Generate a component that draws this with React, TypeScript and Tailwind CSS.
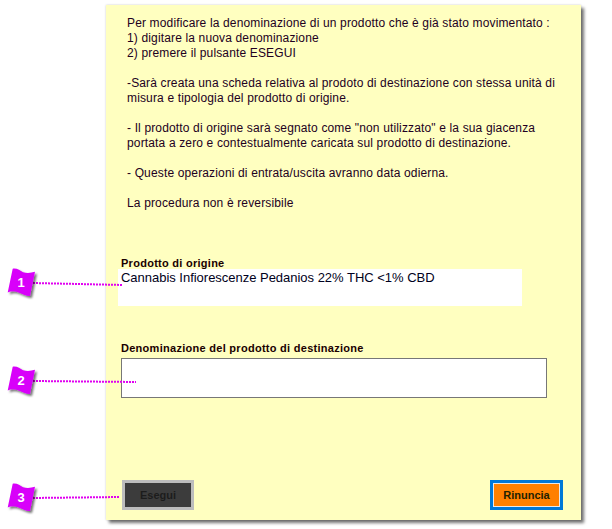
const lines: string[] = [
  "Per modificare la denominazione di un prodotto che è già stato movimentato :",
  "1) digitare la nuova denominazione",
  "2) premere il pulsante ESEGUI",
  "",
  "-Sarà creata una scheda relativa al prodoto di destinazione con stessa unità di",
  "misura e tipologia del prodotto di origine.",
  "",
  "- Il prodotto di origine sarà segnato come \"non utilizzato\" e la sua giacenza",
  "portata a zero e contestualmente caricata sul prodotto di destinazione.",
  "",
  "- Queste operazioni di entrata/uscita avranno data odierna.",
  "",
  "La procedura non è reversibile",
];

function Callout({ n, top, x2, y2 }: { n: number; top: number; x2: number; y2: number }) {
  return (
    <div className="absolute left-0 w-[160px] h-[40px]" style={{ top }}>
      <svg width="160" height="40" viewBox="0 0 160 40" className="absolute left-0 top-0 overflow-visible">
        <defs>
          <filter id={`s${n}`} x="-30%" y="-30%" width="170%" height="170%">
            <feDropShadow dx="2" dy="2" stdDeviation="1.2" floodColor="#000" floodOpacity="0.55" />
          </filter>
        </defs>
        <line x1="33" y1="15" x2={x2} y2={y2} stroke="#e000f0" strokeWidth="2" strokeDasharray="2 1" />
        <path
          d="M12.7 0.7 C17 0 20 2.5 23 4.2 C27 5.5 31 5 35 3.8 L30 28 C26 28 22 25.5 18 24.2 C14 23 11 23 7.7 24.5 Z"
          fill="#d800fa"
          filter={`url(#s${n})`}
        />
      </svg>
      <span className="absolute left-[7px] top-[4px] w-[28px] h-[20px] flex items-center justify-center text-white font-bold text-[13px] leading-none">
        {n}
      </span>
    </div>
  );
}

export default function App() {
  return (
    <div
      className="relative w-[612px] h-[529px] bg-white overflow-hidden pt-[5px]"
      style={{ fontFamily: '"Liberation Sans", Arial, sans-serif' }}
    >
      <div className="ml-[106px] w-[475px] h-[515px] bg-[#ffffc0] shadow-[3px_3px_3px_rgba(0,0,0,0.55),0_0_2px_rgba(0,0,0,0.2)] flex flex-col pl-[15px] pr-[34px] text-[#1a0000]">
        <div className="pt-[11px] pl-[6px] text-[12px] leading-[15px] tracking-[0.148px] text-[#220022]">
          {lines.map((l, i) => (
            <div key={i} className="h-[15px] whitespace-nowrap">
              {l}
            </div>
          ))}
        </div>
        <div className="mt-[46px] h-[12px] text-[11px] leading-[13px] tracking-[0.27px] font-bold text-[#1a0000] whitespace-nowrap">
          Prodotto di origine
        </div>
        <div className="ml-[-3px] w-[404px] h-[37px] bg-white pl-[3px] pt-[1px] text-[13px] leading-[15px] tracking-[-0.02px] text-[#000020] whitespace-nowrap">
          Cannabis Infiorescenze Pedanios 22% THC &lt;1% CBD
        </div>
        <div className="mt-[36px] text-[11px] leading-[13px] tracking-[0.28px] font-bold text-[#1a0000] whitespace-nowrap">
          Denominazione del prodotto di destinazione
        </div>
        <div className="mt-[3px] w-[426px] h-[40px] bg-white border border-[#777777]"></div>
        <div className="mt-[82px] w-[442px] flex justify-between items-start">
          <button className="ml-[1px] w-[72px] h-[30px] bg-[#3c3c3c] border-[3px] border-[#bdbdbd] text-[11px] font-bold text-[#1c1c1c] flex items-center justify-center">
            Esegui
          </button>
          <button className="w-[73px] h-[30px] bg-[#ff8000] border-[3px] border-[#0078d7] outline outline-1 outline-offset-[-4px] outline-[#e8e8e8] text-[11px] font-bold text-[#222200] flex items-center justify-center">
            Rinuncia
          </button>
        </div>
      </div>
      <Callout n={1} top={268} x2={123} y2={17} />
      <Callout n={2} top={366} x2={136} y2={16} />
      <Callout n={3} top={483} x2={120} y2={14} />
    </div>
  );
}
